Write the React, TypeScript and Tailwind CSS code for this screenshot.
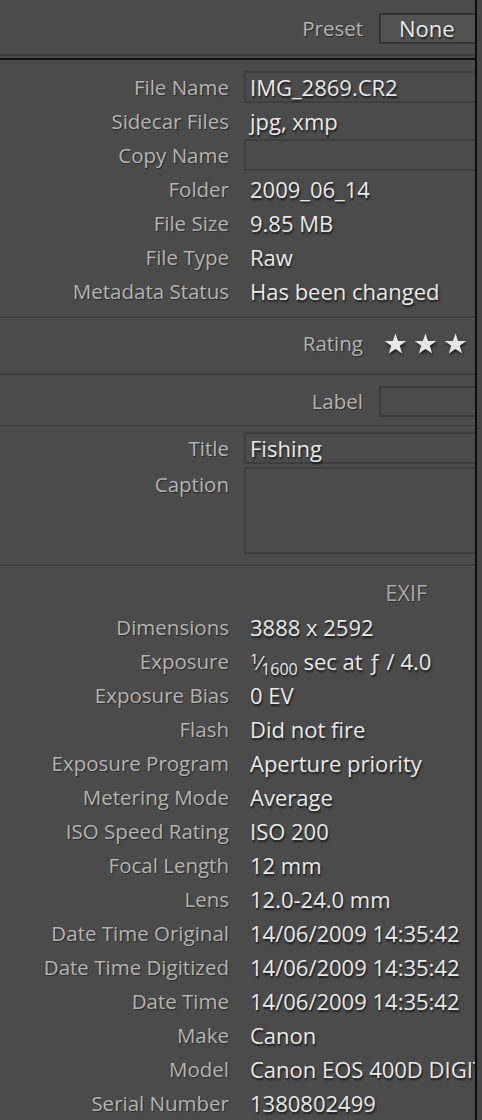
const FONT = "font-['Open_Sans','DejaVu_Sans',sans-serif]";
const LABEL = "text-right text-[20.5px] text-[#b3b3b3] [text-shadow:1px_1px_1px_rgba(0,0,0,0.45)] whitespace-nowrap";
const VALUE = "pl-[6px] text-[22px] text-[#e8e8e8] [text-shadow:1px_2px_2px_rgba(0,0,0,0.65)] whitespace-nowrap";

function Row({ label, children }: { label: string; children?: React.ReactNode }) {
  return (
    <div className="grid h-[34px] grid-cols-[229px_1fr] items-center gap-x-[15px]">
      <div className={LABEL}>{label}</div>
      <div className={VALUE}>{children}</div>
    </div>
  );
}

function BoxRow({ label, value }: { label: string; value?: string }) {
  return (
    <div className="grid h-[34px] grid-cols-[229px_1fr] items-center gap-x-[15px]">
      <div className={LABEL}>{label}</div>
      <div className="flex h-[32px] items-center border-2 border-r-0 border-[#3e3e3e] pl-[4px] text-[22px] text-[#e8e8e8] [text-shadow:1px_2px_2px_rgba(0,0,0,0.65)] whitespace-nowrap">
        {value}
      </div>
    </div>
  );
}

function Sep() {
  return <div className="h-[3px] bg-[#3f3f3f]" />;
}

function Star() {
  return (
    <svg width="23" height="22" viewBox="0 0 24 23" className="[filter:drop-shadow(1px_2px_1px_rgba(0,0,0,0.6))]">
      <polygon
        points="12,0.5 14.8,8.3 23.2,8.4 16.5,13.4 19,21.5 12,16.6 5,21.5 7.5,13.4 0.8,8.4 9.2,8.3"
        fill="#e6e6e6"
      />
    </svg>
  );
}

const exif: [string, React.ReactNode][] = [
  ["Dimensions", "3888 x 2592"],
  [
    "Exposure",
    <>
      <span className="relative top-[-6px] text-[15px]">1</span>
      <span className="text-[20px]">⁄</span>
      <span className="relative top-[5px] text-[16px]">1600</span> sec at ƒ / 4.0
    </>,
  ],
  ["Exposure Bias", "0 EV"],
  ["Flash", "Did not fire"],
  ["Exposure Program", "Aperture priority"],
  ["Metering Mode", "Average"],
  ["ISO Speed Rating", "ISO 200"],
  ["Focal Length", "12 mm"],
  ["Lens", "12.0-24.0 mm"],
  ["Date Time Original", "14/06/2009 14:35:42"],
  ["Date Time Digitized", "14/06/2009 14:35:42"],
  ["Date Time", "14/06/2009 14:35:42"],
  ["Make", "Canon"],
  ["Model", "Canon EOS 400D DIGITAL"],
  ["Serial Number", "1380802499"],
];

export default function App() {
  return (
    <div className={`flex h-[1120px] w-[482px] overflow-hidden bg-[#444444] ${FONT}`}>
      <div className="flex w-[475px] flex-col overflow-hidden bg-[#4b4b4b]">
        {/* preset */}
        <div className="flex h-[54px] shrink-0 items-center justify-end gap-[16px] pt-[2px]">
          <span className={LABEL}>Preset</span>
          <div className="flex h-[31px] w-[96px] items-center border-2 border-r-0 border-[#333333] bg-[#525252] pl-[18px] text-[22px] text-[#e8e8e8] [text-shadow:1px_2px_2px_rgba(0,0,0,0.65)]">
            None
          </div>
        </div>
        <div className="h-[2px] shrink-0 bg-[#383838]" />
        <div className="h-[2px] shrink-0 bg-[#4b4b4b]" />
        <div className="h-[2px] shrink-0 bg-[#111111]" />

        {/* file info */}
        <div className="shrink-0 pt-[10px] pb-[8px]">
          <BoxRow label="File Name" value="IMG_2869.CR2" />
          <Row label="Sidecar Files">jpg, xmp</Row>
          <BoxRow label="Copy Name" />
          <Row label="Folder">2009_06_14</Row>
          <Row label="File Size">9.85 MB</Row>
          <Row label="File Type">Raw</Row>
          <Row label="Metadata Status">Has been changed</Row>
        </div>
        <Sep />

        {/* rating */}
        <div className="flex h-[55px] shrink-0 items-center justify-end gap-[16px] pb-[3px]">
          <span className={LABEL}>Rating</span>
          <div className="flex w-[96px] gap-[7px] pl-[5px]">
            <Star />
            <Star />
            <Star />
          </div>
        </div>
        <Sep />

        {/* label */}
        <div className="flex h-[50px] shrink-0 items-center justify-end gap-[16px] pt-[3px]">
          <span className={LABEL}>Label</span>
          <div className="h-[31px] w-[96px] border-2 border-r-0 border-[#3b3b3b]" />
        </div>
        <Sep />

        {/* title / caption */}
        <div className="flex shrink-0 flex-col gap-[3px] pt-[6px] pb-[10px]">
          <div className="grid h-[32px] grid-cols-[229px_1fr] items-center gap-x-[15px]">
            <div className={LABEL}>Title</div>
            <div className="flex h-[32px] items-center border-2 border-r-0 border-[#3e3e3e] pl-[4px] text-[22px] text-[#e8e8e8] [text-shadow:1px_2px_2px_rgba(0,0,0,0.65)]">
              Fishing
            </div>
          </div>
          <div className="grid grid-cols-[229px_1fr] items-start gap-x-[15px]">
            <div className={`${LABEL} pt-[2px]`}>Caption</div>
            <div className="h-[87px] border-2 border-r-0 border-[#3e3e3e]" />
          </div>
        </div>
        <Sep />

        {/* exif */}
        <div className="flex h-[44px] shrink-0 items-center justify-end pr-[48px] pt-[10px] text-[21.5px] text-[#a9a9a9] [text-shadow:1px_1px_1px_rgba(0,0,0,0.4)]">
          EXIF
        </div>
        <div className="shrink-0">
          {exif.map(([k, v]) => (
            <Row key={k} label={k}>
              {v}
            </Row>
          ))}
        </div>
      </div>
      <div className="w-[2px] shrink-0 bg-[#0a0a0a]" />
      <div className="flex-1 bg-[#474747]" />
    </div>
  );
}
